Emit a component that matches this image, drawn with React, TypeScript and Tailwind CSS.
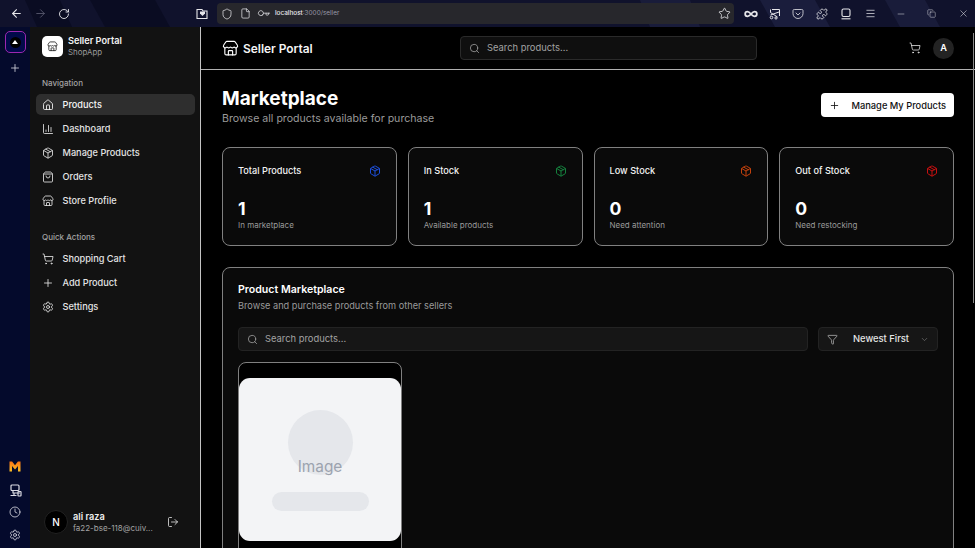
import {
  ArrowLeft,
  ArrowRight,
  ChartColumn,
  ChevronDown,
  Clock,
  Copy,
  File,
  Filter,
  House,
  Key,
  LogOut,
  Menu,
  Minus,
  Package,
  Plus,
  Puzzle,
  RotateCw,
  Search,
  Settings,
  Shield,
  ShoppingBag,
  ShoppingCart,
  Star,
  Store,
  Infinity as InfinityIcon,
  Pocket,
  X,
} from "lucide-react";

const navItems = [
  { label: "Products", icon: House, active: true },
  { label: "Dashboard", icon: ChartColumn },
  { label: "Manage Products", icon: Package },
  { label: "Orders", icon: ShoppingBag },
  { label: "Store Profile", icon: Store },
];

const quickItems = [
  { label: "Shopping Cart", icon: ShoppingCart },
  { label: "Add Product", icon: Plus },
  { label: "Settings", icon: Settings },
];

const stats = [
  { title: "Total Products", value: "1", note: "In marketplace", color: "text-[#1d4ed8]" },
  { title: "In Stock", value: "1", note: "Available products", color: "text-[#15803d]" },
  { title: "Low Stock", value: "0", note: "Need attention", color: "text-[#c2410c]" },
  { title: "Out of Stock", value: "0", note: "Need restocking", color: "text-[#c81010]" },
];

const NavRow = ({ label, icon: Icon, active }: { label: string; icon: typeof House; active?: boolean }) => (
  <div
    className={`mb-[3px] flex h-[21px] items-center gap-[9px] rounded-[5px] px-[5px] text-[9.2px] font-medium leading-none ${
      active ? "bg-[#2e2e2e] text-[#f5f5f5]" : "text-[#e4e4e4]"
    }`}
  >
    <Icon size={12} strokeWidth={1.7} className="ml-[0.5px] shrink-0" />
    <span>{label}</span>
  </div>
);

const BrowserBar = () => (
  <div className="relative flex h-[27px] shrink-0 items-center overflow-hidden bg-[#10122c] text-[#e6e6ea]">
    {/* theme streaks behind the toolbar */}
    <svg className="absolute inset-0" width="975" height="27" viewBox="0 0 975 27">
      <polygon points="25,0 60,0 72,27 37,27" fill="#0a0c22" />
      <polygon points="90,0 155,0 170,27 105,27" fill="#0a0c22" />
      <polygon points="640,0 690,0 700,27 650,27" fill="#191c3a" />
      <polygon points="760,0 815,0 830,27 775,27" fill="#1a1d3c" />
      <polygon points="885,0 925,0 940,27 900,27" fill="#191c3a" />
    </svg>
    <div className="relative flex w-full items-center">
      <ArrowLeft size={13} strokeWidth={2} className="ml-[10px]" />
      <ArrowRight size={13} strokeWidth={1.6} className="ml-[11px] text-[#5a5c70]" />
      <RotateCw size={12} strokeWidth={1.8} className="ml-[11px]" />
      <svg className="ml-[126px]" width="12" height="12" viewBox="0 0 12 12" fill="none" stroke="currentColor" strokeWidth="1.1">
        <path d="M1 3v7.5h10V3H7L6 1.5H1z" />
        <path d="M4 5.5 6.5 8 9 5.5V3.5H4z" fill="currentColor" stroke="none" />
      </svg>
      <div className="ml-[9px] flex h-[21px] w-[517px] items-center rounded-[4px] bg-[#27272c]">
        <Shield size={12} strokeWidth={1.5} className="ml-[4px]" />
        <File size={11} strokeWidth={1.6} className="ml-[7px]" />
        <Key size={11} strokeWidth={1.5} className="ml-[7px] rotate-45" />
        <span className="ml-[6px] text-[6.4px] font-medium text-[#e8e8ec]">
          localhost<span className="font-normal text-[#9a9aa8]">:3000/seller</span>
        </span>
        <Star size={13} strokeWidth={1.5} className="ml-auto mr-[3px]" />
      </div>
      <InfinityIcon size={14} strokeWidth={3} className="ml-[10px]" />
      <svg className="ml-[11px]" width="12" height="12" viewBox="0 0 12 12" fill="none" stroke="currentColor" strokeWidth="1">
        <path d="M3 1.5h7.5V8M1.5 1.5v3" />
        <path d="M1.5 7 10 4M1.5 4.5 8.5 9" />
        <circle cx="2.5" cy="9.5" r="1.3" />
        <circle cx="7" cy="10" r="1.1" />
      </svg>
      <Pocket size={12} strokeWidth={1.6} className="ml-[11px]" />
      <Puzzle size={12} strokeWidth={1.6} className="ml-[12px]" />
      <svg className="ml-[12px]" width="12" height="12" viewBox="0 0 12 12" fill="none" stroke="currentColor" strokeWidth="1.1">
        <rect x="2" y="1" width="8" height="7.5" rx="1.5" />
        <path d="M1.5 10.8h9" />
      </svg>
      <Menu size={11} strokeWidth={1.6} className="ml-[13px]" />
      <Minus size={10} strokeWidth={1.2} className="ml-[20px]" />
      <Copy size={9} strokeWidth={1.2} className="ml-[21px]" />
      <X size={11} strokeWidth={1.2} className="ml-[22px]" />
    </div>
  </div>
);

const BrowserRail = () => (
  <div className="flex w-[30px] shrink-0 flex-col items-center bg-[#040a2c] pb-[7px] pt-[4px] text-[#dcdce4]">
    <div className="flex h-[22px] w-[21px] items-center justify-center rounded-[5px] border border-[#9c27b0] bg-[#020a4a]">
      <div className="flex h-[11px] w-[11px] items-center justify-center rounded-full bg-black">
        <div className="h-0 w-0 border-x-[3px] border-b-[4px] border-x-transparent border-b-white" />
      </div>
    </div>
    <Plus size={12} strokeWidth={1.6} className="mt-[9px]" />
    <svg className="mt-auto" width="12" height="11" viewBox="0 0 12 11">
      <defs>
        <linearGradient id="rail-m" x1="0" y1="0" x2="0" y2="1">
          <stop offset="0" stopColor="#f97316" />
          <stop offset="1" stopColor="#fbbf24" />
        </linearGradient>
      </defs>
      <path d="M0.5 10.5V0.5h2.6L6 4.2 8.9 0.5h2.6v10H9V5L6 8.4 3 5v5.500z" fill="url(#rail-m)" />
    </svg>
    <svg className="mt-[12px]" width="13" height="13" viewBox="0 0 13 13" fill="none" stroke="currentColor" strokeWidth="1.2">
      <rect x="2" y="1" width="8" height="5.500" rx="1" />
      <path d="M4 6.500v2.500h7M1.500 11.500h6M5 9v2.500" />
      <rect x="9" y="7.500" width="3" height="4.500" rx="0.5" />
    </svg>
    <Clock size={12} strokeWidth={1.6} className="mt-[9px]" />
    <Settings size={12} strokeWidth={1.6} className="mt-[11px]" />
  </div>
);

const Sidebar = () => (
  <aside className="flex w-[171px] shrink-0 flex-col border-r border-r-[#c4c4c4] bg-[#121212] pl-[6px] pr-[5px]">
    <div className="flex items-center gap-[5px] pl-[6px] pt-[9px]">
      <div className="flex h-[21px] w-[21px] items-center justify-center rounded-[5px] bg-white text-[#111]">
        <Store size={11} strokeWidth={1.7} />
      </div>
      <div className="leading-none">
        <div className="text-[9.2px] font-semibold text-[#f2f2f2]">Seller Portal</div>
        <div className="mt-[3px] text-[7.9px] text-[#9a9a9a]">ShopApp</div>
      </div>
    </div>
    <div className="mb-[6px] mt-[21px] pl-[6px] text-[8px] font-medium leading-[10px] text-[#a3a3a3]">Navigation</div>
    {navItems.map((item) => (
      <NavRow key={item.label} {...item} />
    ))}
    <div className="mb-[6px] mt-[18px] pl-[6px] text-[8px] font-medium leading-[10px] text-[#a3a3a3]">Quick Actions</div>
    {quickItems.map((item) => (
      <NavRow key={item.label} {...item} />
    ))}
    <div className="mt-auto flex items-center pb-[14px] pl-[8px]">
      <div className="flex h-[24px] w-[24px] items-center justify-center rounded-full border border-[#222] bg-black text-[10px] font-medium text-white">
        N
      </div>
      <div className="ml-[5px] w-[89px] whitespace-nowrap leading-none">
        <div className="text-[9.2px] font-semibold text-[#efefef]">ali raza</div>
        <div className="mt-[3px] text-[8px] text-[#a3a3a3]">fa22-bse-118@cuiv...</div>
      </div>
      <LogOut size={12} strokeWidth={1.6} className="ml-[5px] text-[#e8e8e8]" />
    </div>
  </aside>
);

const StatCard = ({ title, value, note, color }: (typeof stats)[number]) => (
  <div className="flex h-[99px] flex-col rounded-[8px] border border-[#808080] bg-[#0a0a0a] px-[15px] pt-[16px]">
    <div className="flex items-center justify-between">
      <span className="text-[9.2px] font-medium leading-[14px] text-[#f2f2f2]">{title}</span>
      <Package size={12} strokeWidth={2} className={color} />
    </div>
    <div className="mt-[20px] text-[17.6px] font-bold leading-[22px] text-white">{value}</div>
    <div className="text-[8px] leading-[10px] text-[#9a9a9a]">{note}</div>
  </div>
);

const MainPanel = () => (
  <main className="flex min-w-0 flex-1 flex-col bg-black">
    <header className="flex h-[43px] shrink-0 items-center border-b border-b-[#b0b0b0] pl-[21px] pr-[21px]">
      <Store size={17} strokeWidth={1.6} className="text-white" />
      <span className="ml-[4px] mt-[1px] w-[217px] text-[11.9px] font-semibold text-[#f5f5f5]">Seller Portal</span>
      <div className="flex h-[24px] w-[297px] items-center rounded-[4px] border border-[#2a2a2a] bg-[#0f0f0f] pl-[8px]">
        <Search size={11} strokeWidth={1.7} className="text-[#a3a3a3]" />
        <span className="ml-[7px] mt-[1px] text-[9.4px] text-[#a3a3a3]">Search products...</span>
      </div>
      <ShoppingCart size={12} strokeWidth={1.6} className="ml-auto text-[#e5e5e5]" />
      <div className="ml-[12px] flex h-[21px] w-[21px] items-center justify-center rounded-full bg-[#232323] text-[9.2px] font-semibold text-white">
        A
      </div>
    </header>
    <div className="flex min-h-0 flex-1 flex-col overflow-hidden px-[21px] pt-[17px]">
      <div className="flex items-start justify-between">
        <div>
          <h1 className="text-[19px] font-bold leading-[24px] text-white">Marketplace</h1>
          <p className="text-[10.6px] leading-[15px] text-[#9a9a9a]">Browse all products available for purchase</p>
        </div>
        <button className="mt-[6px] flex h-[24px] items-center rounded-[4px] bg-white px-[8px] text-[9.3px] font-medium text-[#111]">
          <Plus size={11} strokeWidth={1.8} />
          <span className="ml-[11px] mt-[1px]">Manage My Products</span>
        </button>
      </div>
      <div className="mt-[21px] grid grid-cols-4 gap-[11px]">
        {stats.map((stat) => (
          <StatCard key={stat.title} {...stat} />
        ))}
      </div>
      <section className="mt-[21px] shrink-0 rounded-t-[8px] border border-[#808080] bg-[#0a0a0a] px-[15px] pt-[15px]">
        <h2 className="text-[10.6px] font-semibold leading-[14px] text-white">Product Marketplace</h2>
        <p className="mt-[2px] text-[9.2px] leading-[14px] text-[#9a9a9a]">Browse and purchase products from other sellers</p>
        <div className="mt-[14px] flex gap-[10px]">
          <div className="flex h-[24px] flex-1 items-center rounded-[4px] border border-[#232323] bg-[#161616] pl-[8px]">
            <Search size={11} strokeWidth={1.7} className="text-[#a3a3a3]" />
            <span className="ml-[7px] mt-[1px] text-[9.4px] text-[#a3a3a3]">Search products...</span>
          </div>
          <div className="flex h-[24px] w-[120px] items-center rounded-[4px] border border-[#232323] bg-[#161616] pl-[8px] text-[9.4px] font-medium text-[#e5e5e5]">
            <Filter size={11} strokeWidth={1.5} className="text-[#c8c8c8]" />
            <span className="ml-[15px] mt-[1px]">Newest First</span>
            <ChevronDown size={9} strokeWidth={1.5} className="ml-[11px] text-[#888]" />
          </div>
        </div>
        <div className="mt-[11px] h-[200px] w-[164px] rounded-t-[8px] border border-[#808080] bg-black pt-[15px]">
          <div className="flex h-[163px] flex-col items-center rounded-[11px] bg-[#f3f4f6]">
            <div className="mt-[32px] h-[65px] w-[65px] rounded-full bg-[#e5e7eb]" />
            <span className="-mt-[18px] text-[15.4px] leading-[20px] text-[#9ca3af]">Image</span>
            <div className="mt-[15px] h-[19px] w-[97px] rounded-full bg-[#e5e7eb]" />
          </div>
        </div>
      </section>
    </div>
  </main>
);

export default function App() {
  return (
    <div className="relative flex h-screen w-full flex-col overflow-hidden font-['Inter',sans-serif]">
      <BrowserBar />
      <div className="flex min-h-0 flex-1">
        <BrowserRail />
        <Sidebar />
        <MainPanel />
      </div>
      {/* overlay scrollbar */}
      <div className="absolute right-[1px] top-[33px] h-[270px] w-[1px] bg-[#8a8a8a]" />
    </div>
  );
}
